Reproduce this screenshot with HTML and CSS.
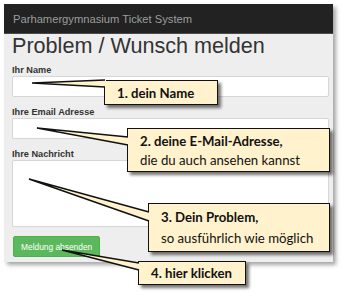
FILE: index.html
```html
<!DOCTYPE html>
<html>
  <head>
    <link rel="stylesheet" href="styles.css">
  </head>
  <body>
    <div class="page">
      <div class="shot">
        <div class="navbar">
          <span class="brand">Parhamergymnasium Ticket System</span>
        </div>

        <form class="form">
          <h1 class="title">Problem / Wunsch melden</h1>

          <div class="group">
            <label class="label">Ihr Name</label>
            <input class="input" type="text" />
          </div>

          <div class="group">
            <label class="label">Ihre Email Adresse</label>
            <input class="input" type="text" />
          </div>

          <div class="group">
            <label class="label">Ihre Nachricht</label>
            <textarea class="input input_area"></textarea>
          </div>

          <button class="button" type="button">Meldung absenden</button>
        </form>
      </div>

      <div class="note note_name">
        <b>1. dein Name</b>
      </div>
      <div class="note note_mail">
        <b>2. deine E-Mail-Adresse,</b><br />die du auch ansehen kannst
      </div>
      <div class="note note_text">
        <b>3. Dein Problem,</b><br />so ausführlich wie möglich
      </div>
      <div class="note note_send">
        <b>4. hier klicken</b>
      </div>

      <svg class="pointers" width="348" height="297" viewBox="0 0 348 297">
        <g class="wedge">
          <polygon points="32,83 106,80 106,87" />
          <polyline points="105,80 32,83 105,87" />
        </g>
        <g class="wedge">
          <polygon points="37,128 129,137 129,145" />
          <polyline points="128,137 37,128 128,145" />
        </g>
        <g class="wedge">
          <polygon points="29,179 150,212 150,221" />
          <polyline points="149,212 29,179 149,221" />
        </g>
        <g class="wedge">
          <polygon points="62,250 140,263 140,270" />
          <polyline points="139,263 62,250 139,270" />
        </g>
      </svg>
    </div>
  </body>
</html>
```

FILE: styles.css
```css
body {
  margin: 0;
  background: #ffffff;
  font-family: "Liberation Sans", Arial, sans-serif;
}

.page {
  position: relative;
  width: 348px;
  height: 297px;
  overflow: hidden;
}

.shot {
  margin: 4px 0 0 4px;
  width: 329px;
  background: #eeeeee;
  box-shadow: 3px 3px 4px rgba(0, 0, 0, 0.35);
}

.navbar {
  height: 30px;
  background: #222222;
  border-bottom: 1px solid #4a4a4a;
  box-sizing: border-box;
  display: flex;
  align-items: center;
  padding-left: 9px;
}

.brand {
  font-size: 11.2px;
  color: #9d9d9d;
}

.form {
  padding: 0 4px 5px 8px;
}

.title {
  margin: 0 0 6px;
  font-size: 21.6px;
  font-weight: normal;
  line-height: 24px;
  color: #333333;
}

.group {
  margin-bottom: 9px;
}

.label {
  display: block;
  margin-bottom: 0;
  font-size: 9.2px;
  font-weight: bold;
  line-height: 12px;
  color: #333333;
}

.input {
  display: block;
  width: 100%;
  height: 21px;
  box-sizing: border-box;
  margin: 0;
  background: #ffffff;
  border: 1px solid #d6d6d6;
  border-radius: 2px;
  resize: none;
}

.input_area {
  height: 67px;
}

.button {
  display: block;
  height: 21px;
  padding: 0 7px;
  margin-left: 1px;
  font-family: "Liberation Sans", Arial, sans-serif;
  font-size: 8.4px;
  color: #ffffff;
  background: #5cb85c;
  border: 1px solid #4cae4c;
  border-radius: 2px;
}

/* callouts */

.note {
  position: absolute;
  box-sizing: border-box;
  background: #fff2cc;
  border: 1px solid #111111;
  box-shadow: 3px 3px 3px rgba(0, 0, 0, 0.55);
  font-family: Lato, "Open Sans", sans-serif;
  font-size: 13.2px;
  line-height: 19px;
  color: #111111;
  padding-left: 12px;
}

.note b {
  font-weight: bold;
}

.note_name {
  left: 104px;
  top: 80px;
  width: 114px;
  height: 25px;
  padding-top: 3px;
}

.note_mail {
  left: 127px;
  top: 128px;
  width: 203px;
  height: 44px;
  padding-top: 3px;
}

.note_text {
  left: 148px;
  top: 203px;
  width: 182px;
  height: 49px;
  padding-top: 3px;
  line-height: 21px;
}

.note_send {
  left: 138px;
  top: 261px;
  width: 108px;
  height: 24px;
  padding-top: 2px;
}

.pointers {
  position: absolute;
  left: 0;
  top: 0;
}

.wedge polygon {
  fill: #fff2cc;
}

.wedge polyline {
  fill: none;
  stroke: #111111;
  stroke-width: 1.5;
}
```
